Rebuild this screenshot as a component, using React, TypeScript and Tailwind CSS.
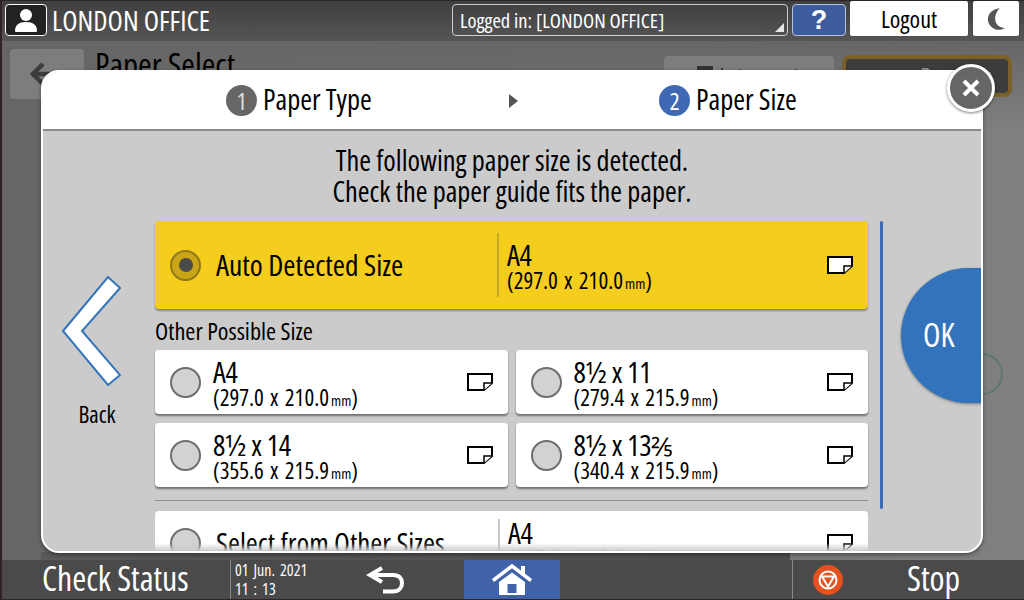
import React from 'react';

// Open Sans has a width axis, condensed is the closest thing to the panel font
const panelFont = "font-['Open_Sans',sans-serif] [font-stretch:75%]";

// paper orientation glyph used on every size card
function PaperIcon() {
  return (
    <svg width="26" height="18" viewBox="0 0 26 18" className="shrink-0">
      <path d="M1 1H25V10L17 17H1Z" fill="#fff" stroke="#000" strokeWidth="2" />
      <path d="M17 17V10H25" fill="#fff" stroke="#000" strokeWidth="1.5" />
    </svg>
  );
}

function Radio({ on }: { on?: boolean }) {
  return (
    <div
      className={`w-[31px] h-[31px] rounded-full border-2 shrink-0 flex items-center justify-center ${
        on ? 'border-[#8f7a1f] bg-[#c9a517]' : 'border-[#6e6e6e] bg-[#d2d2d2]'
      }`}
    >
      {on && <div className="w-[14px] h-[14px] rounded-full bg-[#4a4a4a]" />}
    </div>
  );
}

function SizeText({ size, frac, mm }: { size: string; frac?: string; mm: string }) {
  return (
    <div className="flex flex-col pt-[5px] text-black">
      <span className="text-[29px] leading-[26px] tracking-[-0.3px] whitespace-nowrap">
        {size}
        {frac && <span className="text-[26px] leading-[0]">{frac}</span>}
      </span>
      <span className="mt-[1px] text-[23px] leading-[22px] [word-spacing:2px] whitespace-nowrap">
        ({mm}
        <span className="text-[15px] ml-[2px]">mm</span>)
      </span>
    </div>
  );
}

function SizeCard({ size, frac, mm }: { size: string; frac?: string; mm: string }) {
  return (
    <div className="h-[64px] bg-white rounded-[4px] shadow-[0_2px_2px_rgba(0,0,0,0.45)] flex items-center pl-[15px] pr-[15px]">
      <Radio />
      <div className="ml-[12px] flex-1">
        <SizeText size={size} frac={frac} mm={mm} />
      </div>
      <PaperIcon />
    </div>
  );
}

export default function App() {
  const sizes = [
    { size: 'A4', mm: '297.0 x 210.0' },
    { size: '8½ x 11', mm: '279.4 x 215.9' },
    { size: '8½ x 14', mm: '355.6 x 215.9' },
    { size: '8½ x 13', frac: '⅖', mm: '340.4 x 215.9' },
  ];

  return (
    <div className={`relative w-[1024px] h-[600px] overflow-hidden flex flex-col bg-[#3a3230] ${panelFont}`}>
      {/* top bar */}
      <div className="h-[41px] shrink-0 bg-gradient-to-b from-[#3f3f3f] to-[#555555] flex items-start pl-[5px] pt-[4px] text-white">
        <div className="w-[42px] h-[32px] rounded-[4px] border border-white bg-[#222222] flex items-center justify-center">
          <svg width="24" height="24" viewBox="0 0 24 24" fill="#fff">
            <circle cx="12" cy="7" r="6" />
            <path d="M1 23c0-6 4-9 11-9s11 3 11 9c0 1-1 1-2 1H3c-1 0-2 0-2-1Z" />
          </svg>
        </div>
        <span className="ml-[5px] w-[400px] text-[28px] leading-[32px]">LONDON OFFICE</span>
        <div className="relative w-[336px] h-[32px] rounded-[4px] border border-[#cfcfcf] flex items-center pl-[7px] text-[20.500px]">
          Logged in: [LONDON OFFICE]
          <div className="absolute right-[3px] bottom-[3px] w-0 h-0 border-l-[9px] border-l-transparent border-b-[9px] border-b-[#e6e6e6]" />
        </div>
        <div className="ml-[4px] w-[54px] h-[32px] rounded-[4px] border border-[#b9c4dc] bg-[#3d5c9e] flex items-center justify-center text-[27px] font-['Liberation_Sans',sans-serif] font-bold">
          ?
        </div>
        <div className="ml-[4px] -mt-[3px] w-[118px] h-[35px] rounded-[2px] bg-white text-black flex items-center justify-center text-[24px]">
          Logout
        </div>
        <div className="ml-[5px] -mt-[3px] w-[46px] h-[35px] rounded-[2px] bg-white flex items-center justify-center">
          <svg width="18" height="22" viewBox="0 0 20 24" fill="#555">
            <path d="M14 0C6 1 1 6 1 12.500 1 19 7 24 13 24c3 0 5-1 7-2-6 0-11-4-11-10.500C9 7 11 3 14 0Z" />
          </svg>
        </div>
      </div>

      {/* screen behind the dialog */}
      <div className="relative flex-1 bg-[linear-gradient(to_bottom,#666666,transparent_90px),linear-gradient(to_right,#666666,#808080)] flex items-start pt-[8px] pl-[10px] pr-[12px]">
        <div className="w-[74px] h-[50px] rounded-[4px] bg-[#7d7d7d] flex items-center pl-[20px]">
          <svg width="26" height="24" viewBox="0 0 26 24" fill="none" stroke="#3c3c3c" strokeWidth="4.500">
            <path d="M26 12H4" />
            <path d="M13 2 3 12 13 22" />
          </svg>
        </div>
        <span className="ml-[11px] text-[33px] leading-[32px] text-black">Paper Select</span>
        <div className="ml-auto mt-[7px] w-[170px] h-[40px] rounded-[4px] bg-[#7d7d7d] flex items-center pl-[33px] text-[#333] text-[26px]">
          <div className="w-[16px] h-[20px] bg-[#333] mr-[6px]" />
          Interrupt
        </div>
        <div className="ml-[8px] mt-[6px] w-[170px] h-[42px] rounded-[8px] border-[4px] border-[#7a6128] bg-[#3c3c3c] flex items-center pl-[14px] text-[#8c8c8c] text-[26px]">
          <span className="w-[60px]">‹</span>
          Preview
        </div>
        <div className="absolute left-[961px] top-[312px] w-[42px] h-[42px] rounded-full border-[2px] border-[#5c7775]" />
        <div className="absolute left-[41px] bottom-0 w-[749px] h-[8px] bg-gradient-to-r from-[#5a5a5a] to-[#4e4e4e]" />
      </div>

      {/* bottom bar */}
      <div className="h-[40px] shrink-0 bg-[#4a4a4a] flex items-stretch text-white">
        <div className="w-[231px] pl-[42px] pb-[4px] border-r border-[#8a8a8a] flex items-center text-[33.800px] whitespace-nowrap">Check Status</div>
        <div className="w-[120px] pl-[4px] flex flex-col justify-center text-[16px] leading-[19px] [word-spacing:2px]">
          <span>01 Jun. 2021</span>
          <span>11 : 13</span>
        </div>
        <div className="w-[113px] flex items-center pl-[15px]">
          <svg width="38" height="28" viewBox="0 0 38 28" fill="none" stroke="#fff" strokeWidth="4">
            <path d="M3 9H27C33 9 36 12.500 36 17S33 25.500 27 25.500H17" />
            <path d="M16 2 4 9 16 16" />
          </svg>
        </div>
        <div className="w-[96px] bg-[#4062a8] flex items-center justify-center">
          <svg width="40" height="32" viewBox="0 0 40 32" fill="#fff">
            <path d="M1 16.500 20 2 39 16.500" fill="none" stroke="#fff" strokeWidth="3.500" />
            <path d="M29 2H33V11L29 8Z" />
            <path fillRule="evenodd" d="M20 8.500 33 18V31H7V18ZM15.500 20V29H24.500V20Z" />
          </svg>
        </div>
        <div className="w-[233px] border-r border-[#8a8a8a]" />
        <div className="flex-1 flex items-center pl-[20px]">
          <div className="w-[30px] h-[30px] rounded-full bg-[#e4521f] flex items-center justify-center">
            <svg width="20" height="20" viewBox="0 0 20 20" fill="none" stroke="#fff" strokeWidth="2">
              <circle cx="10" cy="10" r="8.500" />
              <path d="M4 6.500H16L10 16.500Z" />
            </svg>
          </div>
          <span className="ml-[64px] pb-[4px] text-[34px]">Stop</span>
        </div>
      </div>

      {/* dialog */}
      <div className="absolute left-[41px] top-[70px] w-[942px] h-[483px] rounded-[18px] border-2 border-white overflow-hidden bg-[#cbcbcb] flex flex-col shadow-[0_2px_4px_rgba(0,0,0,0.4)]">
        <div className="h-[59px] shrink-0 bg-white border-b-2 border-[#8a8a8a] flex items-center text-black text-[28.500px]">
          <div className="w-[466px] flex items-center pl-[183px]">
            <div className="w-[31px] h-[31px] rounded-full bg-[#666666] text-[#dddddd] flex items-center justify-center text-[24px]">1</div>
            <span className="ml-[6px] pb-[3px]">Paper Type</span>
          </div>
          <div className="w-0 h-0 border-y-[7px] border-y-transparent border-l-[9px] border-l-[#555]" />
          <div className="flex items-center ml-[141px]">
            <div className="w-[31px] h-[31px] rounded-full bg-[#3f69b5] text-white flex items-center justify-center text-[24px]">2</div>
            <span className="ml-[6px] pb-[3px]">Paper Size</span>
          </div>
        </div>

        <div className="relative flex-1 overflow-hidden flex flex-col">
          <div className="h-[90px] shrink-0 flex flex-col items-center pt-[14px] text-black text-[28.400px] leading-[31px]">
            <span>The following paper size is detected.</span>
            <span>Check the paper guide fits the paper.</span>
          </div>

          <div className="flex items-start">
            <div className="w-[112px] shrink-0 flex flex-col items-center pt-[55px]">
              <svg width="60" height="110" viewBox="0 0 60 110" className="ml-[-16px]">
                <path d="M2 55 47 1 59 12 21 55 59 99 47 109Z" fill="#fff" stroke="#3475bb" strokeWidth="2" strokeLinejoin="miter" />
              </svg>
              <span className="mt-[15px] ml-[-4px] text-[23px] leading-[26px] text-black">Back</span>
            </div>

            <div className="w-[713px] shrink-0">
              <div className="h-[88px] bg-[#f5cd1d] rounded-[4px] shadow-[0_2px_2px_rgba(0,0,0,0.35)] flex items-center pl-[15px] pr-[15px]">
                <Radio on />
                <span className="ml-[15px] w-[281px] text-[29.500px] text-black">Auto Detected Size</span>
                <div className="w-[2px] h-[64px] bg-[#c9a72a]" />
                <div className="ml-[8px] flex-1">
                  <SizeText size="A4" mm="297.0 x 210.0" />
                </div>
                <PaperIcon />
              </div>
              <div className="h-[41px] flex items-end pb-[5px] text-[24.300px] leading-[28px] text-black">Other Possible Size</div>
              <div className="grid grid-cols-2 gap-x-[8px] gap-y-[9px]">
                {sizes.map((s) => (
                  <SizeCard key={s.size} size={s.size} frac={s.frac} mm={s.mm} />
                ))}
              </div>
              <div className="mt-[13px] h-px bg-[#8f8f8f]" />
              <div className="mt-[10px] h-[64px] bg-white rounded-[4px] flex items-center pl-[15px] pr-[15px]">
                <Radio />
                <span className="ml-[15px] w-[282px] text-[29px] text-black whitespace-nowrap">Select from Other Sizes</span>
                <div className="w-[2px] h-[48px] bg-[#c9c9c9]" />
                <div className="ml-[8px] flex-1">
                  <SizeText size="A4" mm="297.0 x 210.0" />
                </div>
                <PaperIcon />
              </div>
            </div>

            <div className="ml-[12px] w-[3px] h-[288px] rounded-full bg-[#3f69b5] shrink-0" />
          </div>

          {/* OK bulges out of the right edge, cut by the dialog */}
          <div className="absolute right-[-1px] top-[137px] w-[81px] h-[135px] rounded-l-[68px] bg-[#3273bb] shadow-[0_1px_3px_rgba(0,0,0,0.4)] flex items-center pl-[22px] pb-[2px] text-white text-[32px]">
            OK
          </div>
          {/* fade at the scroll edge */}
          <div className="absolute left-0 right-0 bottom-0 h-[8px] bg-gradient-to-b from-transparent to-[#cbcbcb]" />
        </div>
      </div>

      {/* close */}
      <div className="absolute left-[947px] top-[64px] w-[48px] h-[48px] rounded-full border-[3px] border-white bg-[#666666] shadow-[0_1px_3px_rgba(0,0,0,0.5)] flex items-center justify-center">
        <svg width="20" height="20" viewBox="0 0 20 20" stroke="#fff" strokeWidth="4">
          <path d="M3 3 17 17M17 3 3 17" />
        </svg>
      </div>

      {/* dark bezel showing at the panel edge */}
      <div className="absolute inset-0 border-l-2 border-t border-b border-[#2e2423] pointer-events-none" />
    </div>
  );
}
